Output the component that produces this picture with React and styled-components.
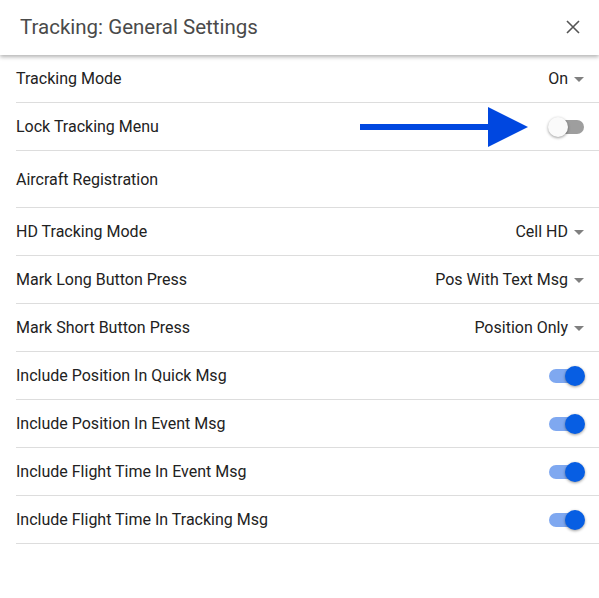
import React from "react";
import styled, { createGlobalStyle } from "styled-components";

const GlobalStyle = createGlobalStyle`
  html, body {
    margin: 0;
    padding: 0;
    background: #fff;
    font-family: Roboto, "Liberation Sans", sans-serif;
  }
`;

const rows = [
  { label: "Tracking Mode", type: "select", value: "On" },
  { label: "Lock Tracking Menu", type: "toggle", on: false, arrow: true },
  { label: "Aircraft Registration", type: "text" },
  { label: "HD Tracking Mode", type: "select", value: "Cell HD" },
  { label: "Mark Long Button Press", type: "select", value: "Pos With Text Msg" },
  { label: "Mark Short Button Press", type: "select", value: "Position Only" },
  { label: "Include Position In Quick Msg", type: "toggle", on: true },
  { label: "Include Position In Event Msg", type: "toggle", on: true },
  { label: "Include Flight Time In Event Msg", type: "toggle", on: true },
  { label: "Include Flight Time In Tracking Msg", type: "toggle", on: true },
];

export default function App() {
  return (
    <Page>
      <GlobalStyle />
      <Header>
        <Title>Tracking: General Settings</Title>
        <CloseButton aria-label="close">
          <svg width="14" height="14" viewBox="0 0 14 14">
            <path d="M1 1L13 13M13 1L1 13" stroke="#555" strokeWidth="1.6" />
          </svg>
        </CloseButton>
      </Header>
      <List>
        {rows.map((r) => (
          <Row key={r.label} tall={r.type === "text"}>
            <Label>{r.label}</Label>
            {r.type === "select" && (
              <Select>
                {r.value}
                <Caret />
              </Select>
            )}
            {r.type === "toggle" && (
              <Toggle on={r.on}>
                <Thumb on={r.on} />
              </Toggle>
            )}
            {r.arrow && (
              <Arrow width="170" height="42" viewBox="0 0 170 42">
                <rect x="0" y="17" width="130" height="6" fill="#0047e0" />
                <polygon points="128,0 168,20 128,40" fill="#0047e0" />
              </Arrow>
            )}
          </Row>
        ))}
      </List>
    </Page>
  );
}

const Page = styled.div`
  width: 599px;
  height: 598px;
  background: #fff;
  overflow: hidden;
`;

const Header = styled.header`
  height: 55px;
  display: flex;
  align-items: center;
  justify-content: space-between;
  padding: 0 19px 0 20px;
  box-shadow: 0 2px 4px rgba(0, 0, 0, 0.3);
  position: relative;
  z-index: 1;
`;

const Title = styled.h1`
  margin: 0;
  margin-top: -2px;
  font-size: 20.5px;
  font-weight: 400;
  color: #4a4a4a;
`;

const CloseButton = styled.div`
  width: 14px;
  height: 14px;
  display: flex;
  margin-top: -2px;
`;

const List = styled.div`
  margin-left: 16px;
`;

const Row = styled.div`
  position: relative;
  height: ${(p) => (p.tall ? 56 : 47)}px;
  display: flex;
  align-items: center;
  justify-content: space-between;
  padding-right: 15px;
  border-bottom: 1px solid #ddd;
`;

const Label = styled.span`
  font-size: 16px;
  color: #222;
`;

const Select = styled.span`
  display: flex;
  align-items: center;
  gap: 6px;
  font-size: 16px;
  color: #222;
`;

const Caret = styled.span`
  width: 0;
  height: 0;
  border-left: 5px solid transparent;
  border-right: 5px solid transparent;
  border-top: 5px solid #808080;
  margin-top: 1px;
`;

const Toggle = styled.span`
  position: relative;
  width: 35px;
  height: 14px;
  border-radius: 7px;
  background: ${(p) => (p.on ? "#7fa8f0" : "#9e9e9e")};
`;

const Thumb = styled.span`
  position: absolute;
  top: -3px;
  left: ${(p) => (p.on ? "16px" : "-1px")};
  width: 20px;
  height: 20px;
  border-radius: 50%;
  background: ${(p) => (p.on ? "#075ee3" : "#fafafa")};
  box-shadow: 0 1px 3px rgba(0, 0, 0, 0.4);
`;

const Arrow = styled.svg`
  position: absolute;
  left: 344px;
  top: 4px;
`;
